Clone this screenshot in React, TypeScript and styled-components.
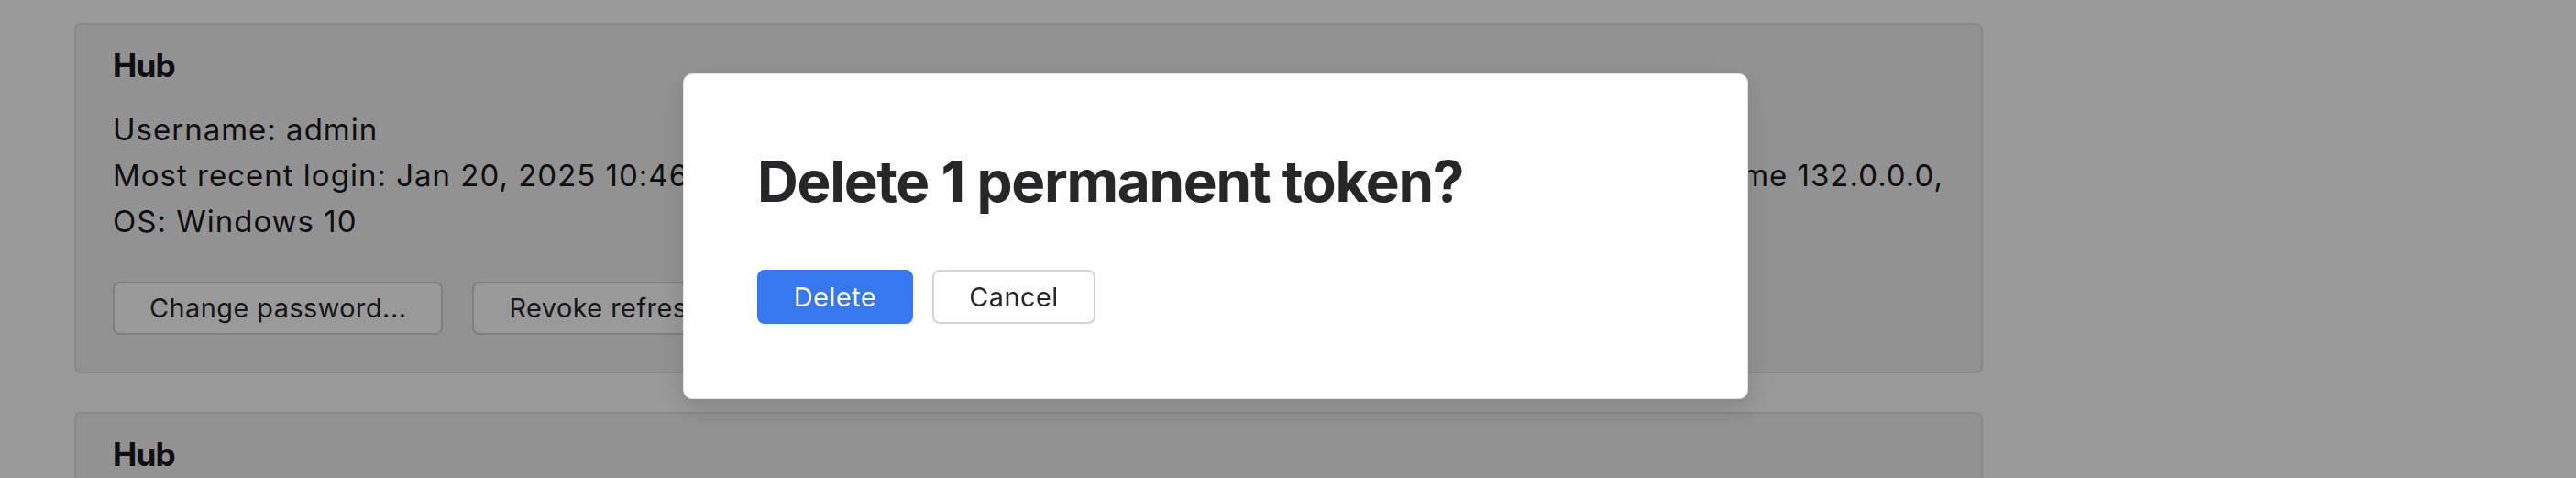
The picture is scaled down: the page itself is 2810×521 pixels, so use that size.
import styled, { createGlobalStyle } from "styled-components";

const GlobalStyle = createGlobalStyle`
  html, body {
    margin: 0;
    padding: 0;
    background: #ffffff;
    font-family: Inter, "Noto Sans", sans-serif;
    color: #18181b;
  }
`;

const Page = styled.div`
  padding: 25px 0 0 81px;
  display: flex;
  flex-direction: column;
  gap: 42px;
  height: 521px;
  box-sizing: border-box;
  overflow: hidden;
`;

const Card = styled.section`
  width: 2082px;
  box-sizing: border-box;
  background: #f4f4f5;
  border: 2px solid #e4e4e7;
  border-radius: 8px;
  padding: 18px 40px 40px 40px;
  flex-shrink: 0;
`;

const CardTitle = styled.h3`
  margin: 0;
  font-size: 35.2px;
  font-weight: 700;
  letter-spacing: -0.025em;
  line-height: 1.5;
`;

const Info = styled.div`
  margin-top: 18px;
  font-size: 33px;
  letter-spacing: 1px;
  line-height: 50px;
`;

const ButtonRow = styled.div`
  display: flex;
  gap: 32px;
  margin-top: 41px;
`;

const Button = styled.button<{ $primary?: boolean }>`
  font-family: Inter, "Noto Sans", sans-serif;
  font-size: 28.8px;
  letter-spacing: 0.5px;
  height: 58px;
  padding: 0 38px;
  border-radius: 8px;
  cursor: pointer;
  border: 2px solid ${(p) => (p.$primary ? "#3777f0" : "#d4d4d8")};
  background: ${(p) => (p.$primary ? "#3777f0" : "#ffffff")};
  color: ${(p) => (p.$primary ? "#ffffff" : "#27272a")};
`;

const DialogButton = styled(Button)`
  height: 59px;
`;

const Overlay = styled.div`
  position: fixed;
  inset: 0;
  background: rgba(0, 0, 0, 0.4);
`;

const Dialog = styled.div`
  position: absolute;
  left: 745px;
  top: 80px;
  width: 1162px;
  box-sizing: border-box;
  background: #ffffff;
  border: 1px solid #e4e4e7;
  border-radius: 10px;
  padding: 80px 80px 81px;
  box-shadow: 0 10px 30px rgba(0, 0, 0, 0.15);
`;

const DialogTitle = styled.h2`
  margin: 0;
  font-size: 62px;
  font-weight: 700;
  letter-spacing: -0.02em;
  line-height: 74px;
  color: #27272a;
`;

const DialogActions = styled.div`
  display: flex;
  gap: 21px;
  margin-top: 59px;
`;

const HubCard = () => (
  <Card>
    <CardTitle>Hub</CardTitle>
    <Info>
      <div>Username: admin</div>
      <div>
        Most recent login: Jan 20, 2025 10:46:12 AM, from 192.168.100.254, device: Desktop, browser: Google Chrome 132.0.0.0, OS: Windows 10
      </div>
    </Info>
    <ButtonRow>
      <Button>Change password...</Button>
      <Button>Revoke refresh tokens...</Button>
    </ButtonRow>
  </Card>
);

export default function App() {
  return (
    <>
      <GlobalStyle />
      <Page>
        <HubCard />
        <HubCard />
      </Page>
      <Overlay>
        <Dialog>
          <DialogTitle>Delete 1 permanent token?</DialogTitle>
          <DialogActions>
            <DialogButton $primary>Delete</DialogButton>
            <DialogButton>Cancel</DialogButton>
          </DialogActions>
        </Dialog>
      </Overlay>
    </>
  );
}
